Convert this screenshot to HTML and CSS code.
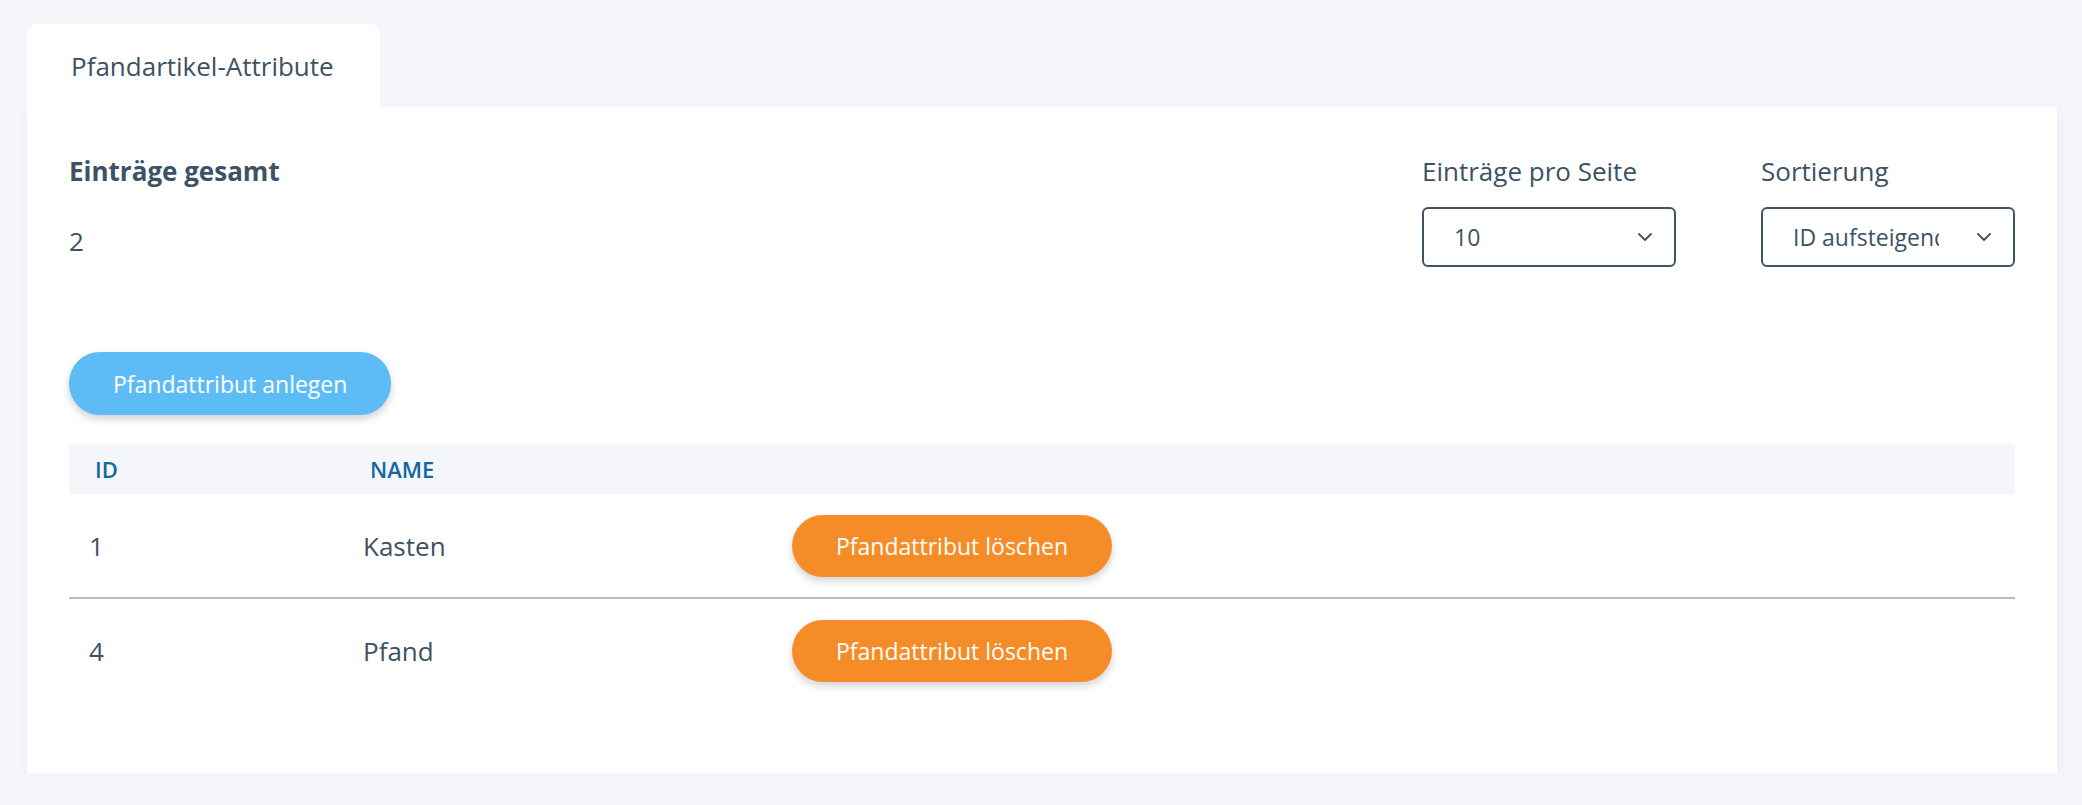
FILE: index.html
```html
<!DOCTYPE html>
<html lang="de">
<head>
<meta charset="utf-8">
<title>Pfandartikel-Attribute</title>
<link rel="stylesheet" href="styles.css">
</head>
<body>
<div class="page">
  <div class="tabs">
    <div class="tab">Pfandartikel-Attribute</div>
  </div>
  <div class="card">
    <div class="top">
      <div class="total">
        <div class="label-bold">Einträge gesamt</div>
        <div class="value">2</div>
      </div>
      <div class="filters">
        <div class="field">
          <div class="label">Einträge pro Seite</div>
          <div class="select">
            <span class="select-text">10</span>
            <svg class="chev" width="14" height="8" viewBox="0 0 14 8"><path d="M1 1 L7 7 L13 1" fill="none" stroke="#3f5466" stroke-width="1.8" stroke-linecap="round" stroke-linejoin="round"/></svg>
          </div>
        </div>
        <div class="field">
          <div class="label">Sortierung</div>
          <div class="select">
            <span class="select-text">ID aufsteigend</span>
            <svg class="chev" width="14" height="8" viewBox="0 0 14 8"><path d="M1 1 L7 7 L13 1" fill="none" stroke="#3f5466" stroke-width="1.8" stroke-linecap="round" stroke-linejoin="round"/></svg>
          </div>
        </div>
      </div>
    </div>
    <button class="btn btn-blue">Pfandattribut anlegen</button>
    <table class="grid">
      <colgroup><col class="c1"><col class="c2"><col></colgroup>
      <thead>
        <tr><th>ID</th><th>NAME</th><th></th></tr>
      </thead>
      <tbody>
        <tr><td>1</td><td>Kasten</td><td><button class="btn btn-orange">Pfandattribut löschen</button></td></tr>
        <tr><td>4</td><td>Pfand</td><td><button class="btn btn-orange">Pfandattribut löschen</button></td></tr>
      </tbody>
    </table>
  </div>
</div>
</body>
</html>
```

FILE: styles.css
```css
* { box-sizing: border-box; }
html, body { margin: 0; padding: 0; }
body {
  background: #f4f6fa;
  font-family: "Open Sans", "Noto Sans", sans-serif;
  color: #3d5264;
}
.page {
  padding: 24px 25px 0 27px;
}
.tabs { display: flex; }
.tab {
  width: 353px;
  height: 83px;
  background: #fff;
  border-radius: 10px 10px 0 0;
  padding-left: 44px;
  display: flex;
  align-items: center;
  font-size: 26px;
  line-height: 36px;
}
.card {
  background: #fff;
  padding: 46px 42px 71px 42px;
  box-shadow: 0 4px 12px rgba(40, 60, 110, 0.05);
}
.top {
  display: flex;
  justify-content: space-between;
  align-items: flex-start;
}
.label-bold {
  font-size: 26px;
  line-height: 36px;
  font-weight: 700;
}
.value {
  margin-top: 34px;
  font-size: 26px;
  line-height: 36px;
}
.filters {
  display: flex;
  gap: 85px;
}
.label {
  font-size: 26px;
  line-height: 36px;
}
.select {
  margin-top: 18px;
  width: 254px;
  height: 60px;
  border: 2px solid #3f5466;
  border-radius: 6px;
  display: flex;
  align-items: center;
  padding: 0 22px 0 30px;
  font-size: 23px;
}
.select-text {
  flex: 1;
  min-width: 0;
  overflow: hidden;
  white-space: nowrap;
}
.chev {
  margin-left: 38px;
  flex: none;
}
.btn {
  font-family: "Open Sans", "Noto Sans", sans-serif;
  font-size: 23px;
  color: #fff;
  border: none;
  height: 62px;
  padding: 0 44px;
  border-radius: 31px;
  box-shadow: 0 4px 8px rgba(0, 0, 0, 0.18);
  cursor: pointer;
}
.btn-blue {
  background: #5dbcf6;
  height: 63px;
  margin-top: 85px;
  display: block;
}
.btn-orange {
  background: #f68c28;
  display: block;
}
.grid {
  margin-top: 28px;
  width: 100%;
  border-collapse: collapse;
  table-layout: fixed;
}
.c1 { width: 277px; }
.c2 { width: 429px; }
.grid thead tr { background: #f5f6fa; }
.grid th {
  height: 51px;
  padding: 0 0 0 26px;
  text-align: left;
  font-size: 22px;
  font-weight: 600;
  color: #12689f;
}
.grid th:nth-child(2) { padding-left: 24px; }
.grid td {
  height: 104px;
  padding: 0 0 0 17px;
  font-size: 26px;
  vertical-align: middle;
}
.grid td:first-child { padding-left: 20px; }
.grid tbody tr:not(:last-child) td {
  border-bottom: 2px solid #bbbbbb;
}
```
